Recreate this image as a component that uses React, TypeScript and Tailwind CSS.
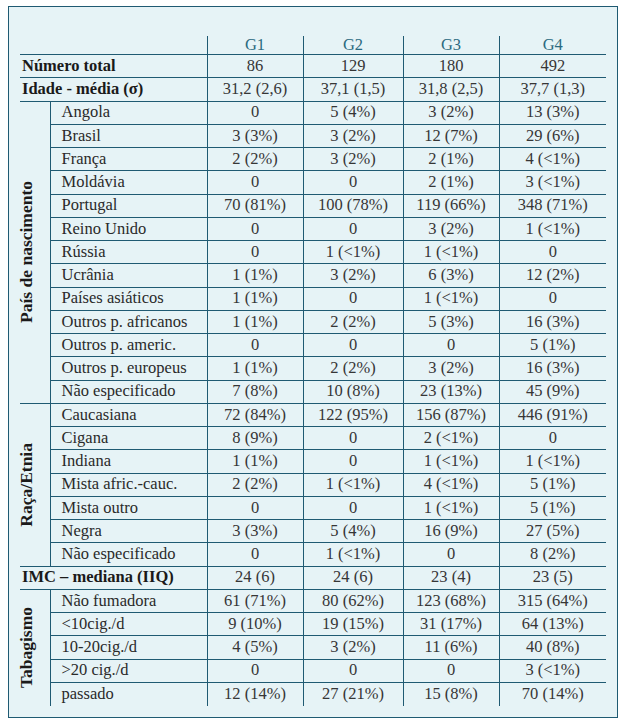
import React from 'react';

type Row = [string, string, string, string, string];

const paises: Row[] = [
  ['Angola', '0', '5 (4%)', '3 (2%)', '13 (3%)'],
  ['Brasil', '3 (3%)', '3 (2%)', '12 (7%)', '29 (6%)'],
  ['França', '2 (2%)', '3 (2%)', '2 (1%)', '4 (<1%)'],
  ['Moldávia', '0', '0', '2 (1%)', '3 (<1%)'],
  ['Portugal', '70 (81%)', '100 (78%)', '119 (66%)', '348 (71%)'],
  ['Reino Unido', '0', '0', '3 (2%)', '1 (<1%)'],
  ['Rússia', '0', '1 (<1%)', '1 (<1%)', '0'],
  ['Ucrânia', '1 (1%)', '3 (2%)', '6 (3%)', '12 (2%)'],
  ['Países asiáticos', '1 (1%)', '0', '1 (<1%)', '0'],
  ['Outros p. africanos', '1 (1%)', '2 (2%)', '5 (3%)', '16 (3%)'],
  ['Outros p. americ.', '0', '0', '0', '5 (1%)'],
  ['Outros p. europeus', '1 (1%)', '2 (2%)', '3 (2%)', '16 (3%)'],
  ['Não especificado', '7 (8%)', '10 (8%)', '23 (13%)', '45 (9%)'],
];

const racas: Row[] = [
  ['Caucasiana', '72 (84%)', '122 (95%)', '156 (87%)', '446 (91%)'],
  ['Cigana', '8 (9%)', '0', '2 (<1%)', '0'],
  ['Indiana', '1 (1%)', '0', '1 (<1%)', '1 (<1%)'],
  ['Mista afric.-cauc.', '2 (2%)', '1 (<1%)', '4 (<1%)', '5 (1%)'],
  ['Mista outro', '0', '0', '1 (<1%)', '5 (1%)'],
  ['Negra', '3 (3%)', '5 (4%)', '16 (9%)', '27 (5%)'],
  ['Não especificado', '0', '1 (<1%)', '0', '8 (2%)'],
];

const tabaco: Row[] = [
  ['Não fumadora', '61 (71%)', '80 (62%)', '123 (68%)', '315 (64%)'],
  ['<10cig./d', '9 (10%)', '19 (15%)', '31 (17%)', '64 (13%)'],
  ['10-20cig./d', '4 (5%)', '3 (2%)', '11 (6%)', '40 (8%)'],
  ['>20 cig./d', '0', '0', '0', '3 (<1%)'],
  ['passado', '12 (14%)', '27 (21%)', '15 (8%)', '70 (14%)'],
];

const line = 'border-[#1f5a72]';

function Values({ r, bottom }: { r: Row; bottom: boolean }) {
  return (
    <>
      {r.slice(1).map((v, i) => (
        <td key={i} className={`border-l ${line} ${bottom ? 'border-b' : ''} p-0 text-center text-[#363636]`}>
          {v}
        </td>
      ))}
    </>
  );
}

function Group({ title, rows, last }: { title: string; rows: Row[]; last?: boolean }) {
  return (
    <>
      {rows.map((r, i) => {
        const bottom = !(last && i === rows.length - 1);
        return (
          <tr key={r[0]} className="h-[23.25px]">
            {i === 0 && (
              <td rowSpan={rows.length} className={`border-r ${line} ${last ? '' : 'border-b'} p-0 align-middle`}>
                <div className="flex justify-start ml-[-2px]">
                  <span className="[writing-mode:vertical-rl] rotate-180 font-bold text-[#1a1a1a] leading-none text-[17.5px] whitespace-nowrap">
                    {title}
                  </span>
                </div>
              </td>
            )}
            <td className={`${line} ${bottom ? 'border-b' : ''} p-0 pl-[11px] text-[#2a2a2a] whitespace-nowrap`}>{r[0]}</td>
            <Values r={r} bottom={bottom} />
          </tr>
        );
      })}
    </>
  );
}

function Single({ r }: { r: Row }) {
  return (
    <tr className="h-[23.25px]">
      <td colSpan={2} className={`border-b ${line} p-0 pl-[2px] font-bold text-[#1a1a1a] whitespace-nowrap`}>{r[0]}</td>
      <Values r={r} bottom />
    </tr>
  );
}

export default function App() {
  return (
    <div className="w-[627px] h-[726px] bg-white pt-[6px] pl-[8px]" style={{ fontFamily: '"Liberation Serif", "DejaVu Serif", serif' }}>
      <div className={`w-[610px] h-[712px] border ${line} bg-[#e6f3f6] pt-[29px] pl-[11px]`}>
        <table className="w-[586px] table-fixed border-collapse text-[16.5px] leading-none">
          <colgroup>
            <col className="w-[30px]" />
            <col className="w-[157px]" />
            <col className="w-[96px]" />
            <col className="w-[100px]" />
            <col className="w-[96px]" />
            <col className="w-[107px]" />
          </colgroup>
          <thead>
            <tr className="h-[18.5px]">
              <th colSpan={2} className={`border-b ${line} p-0`}></th>
              {['G1', 'G2', 'G3', 'G4'].map((g) => (
                <th key={g} className={`border-l border-b ${line} p-0 text-center font-normal text-[#2b6a80]`}>
                  {g}
                </th>
              ))}
            </tr>
          </thead>
          <tbody>
            <Single r={['Número total', '86', '129', '180', '492']} />
            <Single r={['Idade - média (σ)', '31,2 (2,6)', '37,1 (1,5)', '31,8 (2,5)', '37,7 (1,3)']} />
            <Group title="País de nascimento" rows={paises} />
            <Group title="Raça/Etnia" rows={racas} />
            <Single r={['IMC – mediana (IIQ)', '24 (6)', '24 (6)', '23 (4)', '23 (5)']} />
            <Group title="Tabagismo" rows={tabaco} last />
          </tbody>
        </table>
      </div>
    </div>
  );
}
